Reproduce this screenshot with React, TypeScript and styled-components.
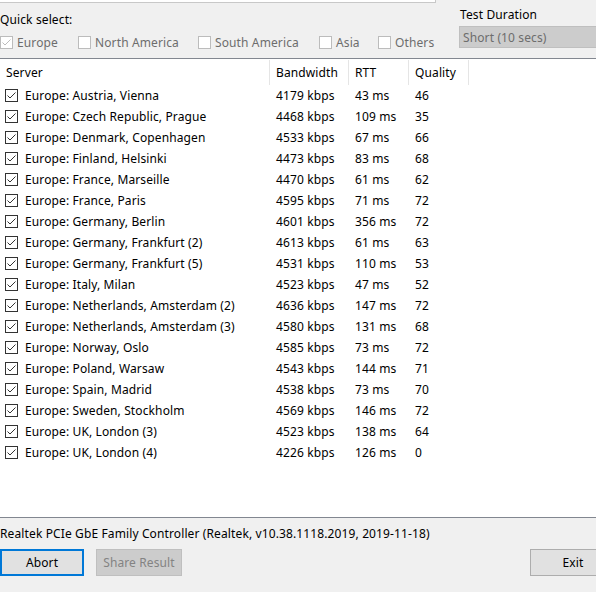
import React from "react";
import styled, { createGlobalStyle } from "styled-components";

const GlobalStyle = createGlobalStyle`
  html, body {
    margin: 0;
    padding: 0;
    overflow: hidden;
    background: #f0f0f0;
  }
  body {
    font-family: "Noto Sans", "Liberation Sans", Arial, sans-serif;
    font-size: 12px;
    letter-spacing: 0.12px;
    color: #000;
  }
`;

const Window = styled.div`
  width: 616px;
  height: 592px;
  display: flex;
  flex-direction: column;
  background: #f0f0f0;
`;

const TopArea = styled.div`
  display: grid;
  grid-template-columns: 459px 1fr;
  height: 58px;
`;

const LeftTop = styled.div`
  display: flex;
  flex-direction: column;
`;

const BoxRemnant = styled.div`
  width: 435px;
  height: 2px;
  background: #fff;
  border-right: 1px solid #c8c8c8;
  border-bottom: 1px solid #c8c8c8;
`;

const Label = styled.div<{ $mt?: number }>`
  margin-top: ${(p) => p.$mt ?? 0}px;
  line-height: 16px;
  height: 16px;
  white-space: nowrap;
`;

const CheckRow = styled.div`
  display: flex;
  align-items: center;
  margin-top: 6px;
  height: 16px;
`;

const RegionOption = styled.label<{ $w: number }>`
  display: flex;
  align-items: center;
  gap: 4px;
  width: ${(p) => p.$w}px;
  color: #6d6d6d;
  white-space: nowrap;
`;

const Box = styled.span<{ $disabled?: boolean }>`
  display: inline-flex;
  width: 13px;
  height: 13px;
  box-sizing: border-box;
  border: 1px solid ${(p) => (p.$disabled ? "#bcbcbc" : "#333333")};
  background: #fff;
  flex: none;
`;

const RightTop = styled.div`
  display: flex;
  flex-direction: column;
  padding-top: 7px;
`;

const DurationLabel = styled.div`
  padding-left: 1px;
  line-height: 16px;
  height: 16px;
`;

const Combo = styled.div`
  margin-top: 3px;
  height: 22px;
  box-sizing: border-box;
  border: 1px solid #bfbfbf;
  background: #cccccc;
  color: #6d6d6d;
  display: flex;
  align-items: center;
  padding-left: 3px;
`;

const List = styled.div`
  width: 596px;
  height: 460px;
  box-sizing: border-box;
  padding-top: 1px;
  border-top: 1px solid #828790;
  border-bottom: 1px solid #828790;
  background: #fff;
  display: flex;
  flex-direction: column;
`;

const Header = styled.div`
  display: flex;
  height: 25px;
`;

const HeaderCell = styled.div<{ $w: number }>`
  width: ${(p) => p.$w}px;
  box-sizing: border-box;
  border-right: 1px solid #e5e5e5;
  padding-left: 6px;
  display: flex;
  align-items: center;
  padding-bottom: 1px;
`;

const Row = styled.div`
  display: flex;
  align-items: center;
  height: 21px;
`;

const Cell = styled.div<{ $w: number }>`
  width: ${(p) => p.$w}px;
  padding-left: 6px;
  box-sizing: border-box;
  white-space: nowrap;
  overflow: hidden;
`;

const ServerCell = styled.div`
  width: 270px;
  display: flex;
  align-items: center;
  gap: 7px;
  padding-left: 5px;
  box-sizing: border-box;
  white-space: nowrap;
`;

const Status = styled.div`
  margin-top: 8px;
  height: 16px;
  line-height: 16px;
  white-space: nowrap;
`;

const ButtonRow = styled.div`
  display: flex;
  margin-top: 7px;
  gap: 12px;
`;

const Button = styled.button<{ $variant?: "default" | "disabled" | "normal"; $w: number }>`
  width: ${(p) => p.$w}px;
  height: 27px;
  box-sizing: border-box;
  font: inherit;
  letter-spacing: inherit;
  padding: 0;
  margin: 0;
  background: ${(p) => (p.$variant === "disabled" ? "#cccccc" : "#e1e1e1")};
  border: ${(p) =>
    p.$variant === "default"
      ? "2px solid #0078d7"
      : p.$variant === "disabled"
      ? "1px solid #bfbfbf"
      : "1px solid #adadad"};
  color: ${(p) => (p.$variant === "disabled" ? "#838383" : "#000")};
`;

const Spacer = styled.div`
  flex: 1;
`;

const Check = ({ color }: { color: string }) => (
  <svg width="11" height="11" viewBox="0 0 11 11">
    <path d="M1.5 5.5 L4 8 L9.5 2.5" fill="none" stroke={color} strokeWidth="1" />
  </svg>
);

const CheckBox = ({ checked, disabled }: { checked?: boolean; disabled?: boolean }) => (
  <Box $disabled={disabled}>{checked && <Check color={disabled ? "#bcbcbc" : "#333333"} />}</Box>
);

const regions = [
  { name: "Europe", w: 78, checked: true },
  { name: "North America", w: 120, checked: false },
  { name: "South America", w: 121, checked: false },
  { name: "Asia", w: 59, checked: false },
  { name: "Others", w: 60, checked: false },
];

const rows: [string, number, number, number][] = [
  ["Europe: Austria, Vienna", 4179, 43, 46],
  ["Europe: Czech Republic, Prague", 4468, 109, 35],
  ["Europe: Denmark, Copenhagen", 4533, 67, 66],
  ["Europe: Finland, Helsinki", 4473, 83, 68],
  ["Europe: France, Marseille", 4470, 61, 62],
  ["Europe: France, Paris", 4595, 71, 72],
  ["Europe: Germany, Berlin", 4601, 356, 72],
  ["Europe: Germany, Frankfurt (2)", 4613, 61, 63],
  ["Europe: Germany, Frankfurt (5)", 4531, 110, 53],
  ["Europe: Italy, Milan", 4523, 47, 52],
  ["Europe: Netherlands, Amsterdam (2)", 4636, 147, 72],
  ["Europe: Netherlands, Amsterdam (3)", 4580, 131, 68],
  ["Europe: Norway, Oslo", 4585, 73, 72],
  ["Europe: Poland, Warsaw", 4543, 144, 71],
  ["Europe: Spain, Madrid", 4538, 73, 70],
  ["Europe: Sweden, Stockholm", 4569, 146, 72],
  ["Europe: UK, London (3)", 4523, 138, 64],
  ["Europe: UK, London (4)", 4226, 126, 0],
];

export default function App() {
  return (
    <Window>
      <GlobalStyle />
      <TopArea>
        <LeftTop>
          <BoxRemnant />
          <Label $mt={9}>Quick select:</Label>
          <CheckRow>
            {regions.map((r) => (
              <RegionOption key={r.name} $w={r.w}>
                <CheckBox checked={r.checked} disabled />
                {r.name}
              </RegionOption>
            ))}
          </CheckRow>
        </LeftTop>
        <RightTop>
          <DurationLabel>Test Duration</DurationLabel>
          <Combo>Short (10 secs)</Combo>
        </RightTop>
      </TopArea>
      <List>
        <Header>
          <HeaderCell $w={270}>Server</HeaderCell>
          <HeaderCell $w={79}>Bandwidth</HeaderCell>
          <HeaderCell $w={60}>RTT</HeaderCell>
          <HeaderCell $w={60}>Quality</HeaderCell>
        </Header>
        {rows.map(([name, bw, rtt, q]) => (
          <Row key={name}>
            <ServerCell>
              <CheckBox checked />
              {name}
            </ServerCell>
            <Cell $w={79}>{bw} kbps</Cell>
            <Cell $w={60}>{rtt} ms</Cell>
            <Cell $w={60}>{q}</Cell>
          </Row>
        ))}
      </List>
      <Status>Realtek PCIe GbE Family Controller (Realtek, v10.38.1118.2019, 2019-11-18)</Status>
      <ButtonRow>
        <Button $variant="default" $w={84}>Abort</Button>
        <Button $variant="disabled" $w={86}>Share Result</Button>
        <Spacer />
        <Button $variant="normal" $w={86}>Exit</Button>
      </ButtonRow>
    </Window>
  );
}
